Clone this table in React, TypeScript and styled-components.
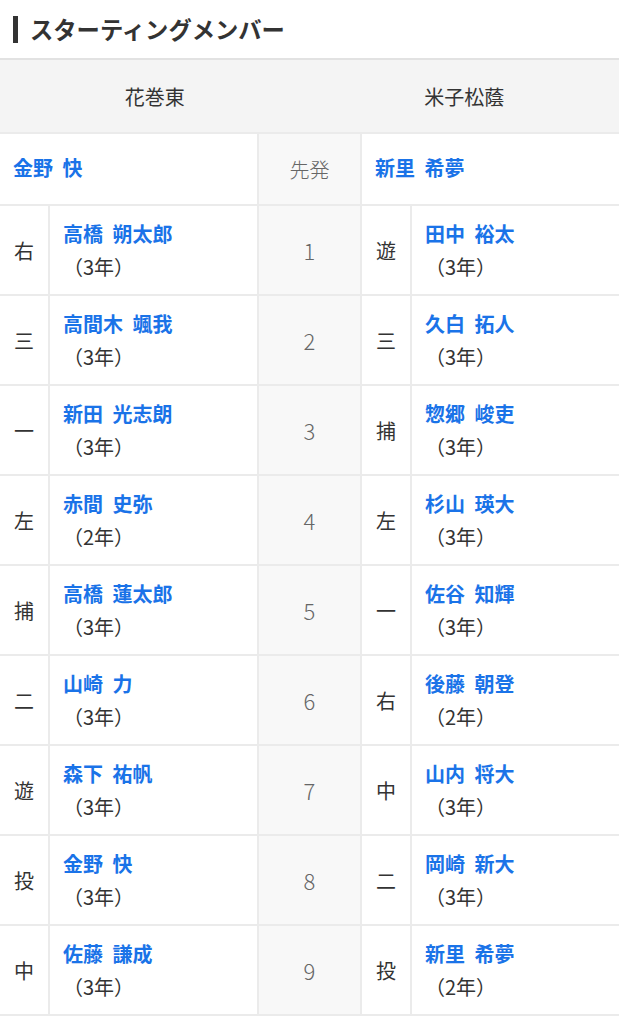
import { createGlobalStyle, styled } from "styled-components";

const GlobalStyle = createGlobalStyle`
    body {
        margin: 0;
        background: #fff;
        font-family: "Noto Sans CJK JP", "Noto Sans", sans-serif;
        color: #333;
    }
`;

const Title = styled.h2`
    display: flex;
    align-items: center;
    gap: 12px;
    margin: 0;
    height: 58px;
    padding-left: 13px;
    font-size: 23.3px;
    font-weight: 700;
    color: #333;

    &::before {
        content: "";
        width: 5px;
        height: 27px;
        background: #333;
    }
`;

const Table = styled.div`
    display: grid;
    grid-template-columns: 48px 207px 101px 48px 207px;
    grid-template-rows: 72px 70px repeat(9, 88px);
    gap: 2px;
    background: #ebebeb;
    border-top: 2px solid #e2e2e2;
    padding-bottom: 2px;
`;

const HeaderRow = styled.div`
    grid-column: 1 / -1;
    display: grid;
    grid-template-columns: 1fr 1fr;
    background: #f4f4f4;
    font-size: 20px;
    color: #333;

    span {
        display: flex;
        align-items: center;
        justify-content: center;
    }
`;

const Cell = styled.div<{ $span?: number; $gray?: boolean }>`
    display: flex;
    align-items: center;
    justify-content: center;
    grid-column: span ${(p) => p.$span ?? 1};
    background: ${(p) => (p.$gray ? "#f8f8f8" : "#fff")};
    font-size: 20px;
    color: #333;
`;

const StarterCell = styled(Cell)`
    justify-content: flex-start;
    padding-left: 13px;
    padding-bottom: 3px;
`;

const NumberCell = styled(Cell)`
    color: #666;
    font-size: 20px;
    font-weight: 300;
`;

const Num = styled.span`
    font-size: 22px;
`;

const NameCell = styled.div`
    display: flex;
    flex-direction: column;
    justify-content: center;
    padding-left: 13px;
    background: #fff;
    line-height: 33px;
`;

const Name = styled.a`
    color: #1a73e8;
    font-weight: 700;
    font-size: 20px;
    word-spacing: 5px;
    text-decoration: none;
`;

const Grade = styled.span`
    font-size: 20px;
    color: #333;
`;

type Player = { pos: string; name: string; grade: number };

const home: Player[] = [
    { pos: "右", name: "高橋 朔太郎", grade: 3 },
    { pos: "三", name: "高間木 颯我", grade: 3 },
    { pos: "一", name: "新田 光志朗", grade: 3 },
    { pos: "左", name: "赤間 史弥", grade: 2 },
    { pos: "捕", name: "高橋 蓮太郎", grade: 3 },
    { pos: "二", name: "山崎 力", grade: 3 },
    { pos: "遊", name: "森下 祐帆", grade: 3 },
    { pos: "投", name: "金野 快", grade: 3 },
    { pos: "中", name: "佐藤 謙成", grade: 3 },
];

const away: Player[] = [
    { pos: "遊", name: "田中 裕太", grade: 3 },
    { pos: "三", name: "久白 拓人", grade: 3 },
    { pos: "捕", name: "惣郷 峻吏", grade: 3 },
    { pos: "左", name: "杉山 瑛大", grade: 3 },
    { pos: "一", name: "佐谷 知輝", grade: 3 },
    { pos: "右", name: "後藤 朝登", grade: 2 },
    { pos: "中", name: "山内 将大", grade: 3 },
    { pos: "二", name: "岡崎 新大", grade: 3 },
    { pos: "投", name: "新里 希夢", grade: 2 },
];

export default function App() {
    return (
        <>
            <GlobalStyle />
            <Title>スターティングメンバー</Title>
            <Table>
                <HeaderRow>
                    <span>花巻東</span>
                    <span>米子松蔭</span>
                </HeaderRow>
                <StarterCell $span={2}>
                    <Name>金野 快</Name>
                </StarterCell>
                <NumberCell $gray>先発</NumberCell>
                <StarterCell $span={2}>
                    <Name>新里 希夢</Name>
                </StarterCell>
                {home.map((h, i) => {
                    const a = away[i];
                    return [
                        <Cell key={`hp${i}`}>{h.pos}</Cell>,
                        <NameCell key={`hn${i}`}>
                            <Name>{h.name}</Name>
                            <Grade>（{h.grade}年）</Grade>
                        </NameCell>,
                        <NumberCell key={`n${i}`} $gray>
                            <Num>{i + 1}</Num>
                        </NumberCell>,
                        <Cell key={`ap${i}`}>{a.pos}</Cell>,
                        <NameCell key={`an${i}`}>
                            <Name>{a.name}</Name>
                            <Grade>（{a.grade}年）</Grade>
                        </NameCell>,
                    ];
                })}
            </Table>
        </>
    );
}
